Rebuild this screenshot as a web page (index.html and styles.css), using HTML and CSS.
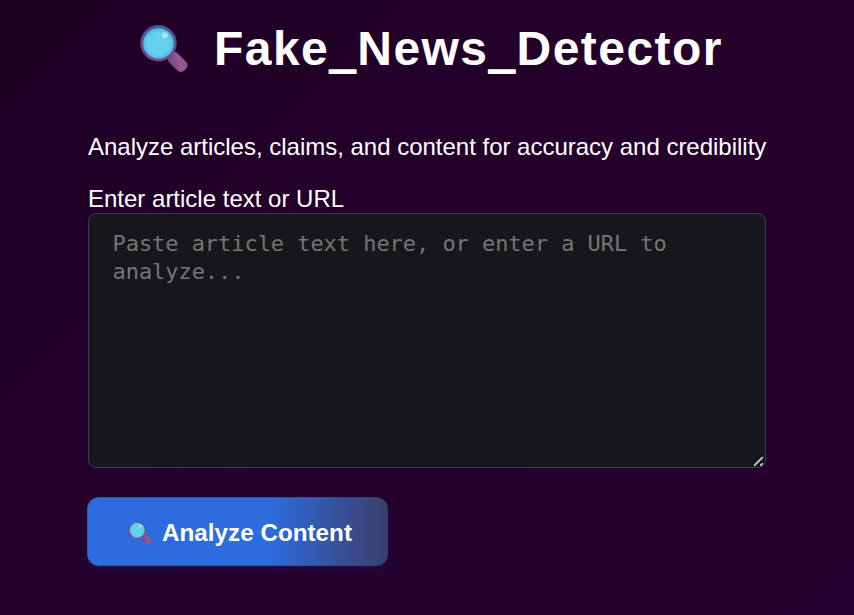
FILE: index.html
```html
<!DOCTYPE html>
<html lang="en">
<head>
<meta charset="utf-8">
<title>Fake_News_Detector</title>
<link rel="stylesheet" href="styles.css">
</head>
<body>
<svg class="defs" width="0" height="0" aria-hidden="true">
  <defs>
    <linearGradient id="rim" x1="0" y1="0" x2="0" y2="1"><stop offset="0" stop-color="#465a9a"/><stop offset="1" stop-color="#7d4587"/></linearGradient>
    <linearGradient id="grip" x1="0" y1="0" x2="1" y2="1"><stop offset="0" stop-color="#70437d"/><stop offset=".6" stop-color="#965893"/><stop offset="1" stop-color="#8b4f8a"/></linearGradient>
    <radialGradient id="glass"><stop offset=".7" stop-color="#65d1ec"/><stop offset="1" stop-color="#4fb9ea"/></radialGradient>
    <symbol id="lens" viewBox="0 0 48 48">
      <rect x="-6.2" y="-10.8" width="12.4" height="21.6" rx="5" transform="translate(37.6 37) rotate(-45)" fill="url(#grip)"/>
      <circle cx="18.5" cy="18.3" r="18.2" fill="url(#rim)"/>
      <circle cx="18.5" cy="18.5" r="15.3" fill="url(#glass)"/>
      <circle cx="25" cy="10.2" r="2.9" fill="#b5dcf4"/>
    </symbol>
  </defs>
</svg>
<main class="detector">
  <h1 class="title"><svg class="title-icon" aria-hidden="true"><use href="#lens"/></svg><span>Fake<span class="bar">_</span>News<span class="bar">_</span>Detector</span></h1>
  <p class="subtitle">Analyze articles, claims, and content for accuracy and credibility</p>
  <label class="label" for="article">Enter article text or URL</label>
  <div class="field">
    <textarea class="article" id="article" placeholder="Paste article text here, or enter a URL to analyze..."></textarea>
    <svg class="resizer" viewBox="0 0 12 12" aria-hidden="true"><path class="resizer-shade" d="M0.5 10.5 10.5 .5M6.5 10.5l4-4"/><path class="resizer-line" d="M2 10.8 10.8 2M8.2 10.8l2.6-2.6"/></svg>
  </div>
  <button class="analyze"><svg class="analyze-icon" aria-hidden="true"><use href="#lens"/></svg><span>Analyze Content</span></button>
</main>
</body>
</html>
```

FILE: styles.css
```css
* { box-sizing: border-box; }
body {
  margin: 0;
  height: 615px;
  overflow: hidden;
  background: linear-gradient(135deg, #1e0024 0%, #230029 35%, #27002f 100%);
  color: #fff;
  font: 24px/28px "Liberation Sans", Arial, sans-serif;
}
.defs { position: absolute; }
.detector {
  display: flex;
  flex-direction: column;
  align-items: flex-start;
  width: 678px;
  margin-left: 88px;
  padding-top: 21px;
}
.title {
  display: flex;
  align-items: center;
  gap: 26px;
  margin: 0 0 56px;
  padding-left: 52px;
  height: 56px;
  font-size: 48px;
  line-height: 56px;
  letter-spacing: 1.44px;
  white-space: nowrap;
}
.title-icon { width: 48px; height: 48px; }
.bar { text-shadow: 0 1px 0 #fff, 0 2px 0 #fff, 0 3px 0 #fff; }
.subtitle { margin: 0 0 24px; white-space: nowrap; letter-spacing: -0.01px; }
.label { display: block; }
.field { position: relative; margin-bottom: 29px; }
.article {
  display: block;
  width: 678px;
  height: 255px;
  padding: 16px 24px 16px 23.5px;
  border: 1px solid #363c68;
  border-radius: 8px;
  background: #17161a;
  color: #fff;
  font: 22px/28px "DejaVu Sans Mono", monospace;
  letter-spacing: -0.05px;
  resize: none;
  outline: none;
}
.article::placeholder { color: #757575; }
.resizer {
  position: absolute;
  right: 2px;
  bottom: 1px;
  width: 12px;
  height: 12px;
  fill: none;
}
.resizer-shade { stroke: #000; stroke-width: 1.5; }
.resizer-line { stroke: #bababa; stroke-width: 2.1; }
.analyze {
  display: flex;
  align-items: center;
  gap: 10px;
  width: 301px;
  height: 69px;
  margin-left: -1px;
  padding: 2px 0 0 40px;
  border: 1px solid rgba(54, 60, 104, .45);
  border-radius: 12px;
  background: linear-gradient(90deg, #2d6cdf 60%, #3a3f6b 100%) border-box;
  box-shadow: 0 4px 12px rgba(45, 60, 160, .22);
  color: #fff;
  font: bold 24.25px/28px "Liberation Sans", Arial, sans-serif;
  white-space: nowrap;
}
.analyze-icon { width: 24px; height: 24px; }
```
